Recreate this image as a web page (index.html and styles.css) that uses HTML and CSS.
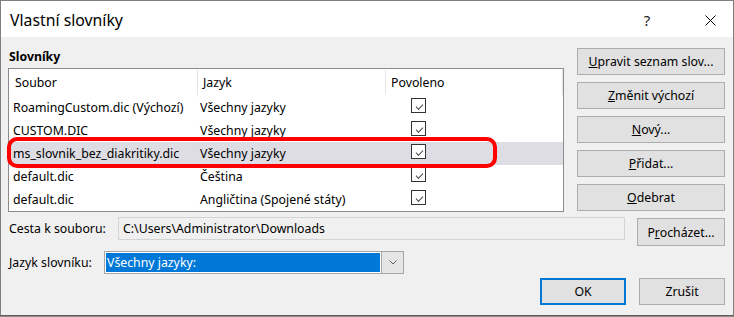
FILE: index.html
```html
<!DOCTYPE html>
<html lang="cs">
<head>
    <meta charset="UTF-8">
    <title>Vlastní slovníky</title>
    <link rel="stylesheet" href="styles.css">
</head>
<body>
    <div class="dialog">
        <div class="titlebar">
            <span class="title">Vlastní slovníky</span>
            <span class="help">?</span>
            <span class="close">
                <svg width="11" height="11" viewBox="0 0 11 11"><path d="M0.5 0.5 L10.5 10.5 M10.5 0.5 L0.5 10.5" stroke="#000" stroke-width="1" fill="none"/></svg>
            </span>
        </div>

        <div class="content">
            <div class="main">
                <div class="group">
                    <div class="group-label">Slovníky</div>
                    <div class="list">
                        <div class="list-head">
                            <span>Soubor</span>
                            <span>Jazyk</span>
                            <span>Povoleno</span>
                        </div>
                        <div class="list-row">
                            <span class="c1">RoamingCustom.dic (Výchozí)</span>
                            <span class="c2">Všechny jazyky</span>
                            <span class="c3"><i class="check"></i></span>
                        </div>
                        <div class="list-row">
                            <span class="c1">CUSTOM.DIC</span>
                            <span class="c2">Všechny jazyky</span>
                            <span class="c3"><i class="check"></i></span>
                        </div>
                        <div class="list-row selected">
                            <span class="c1">ms_slovnik_bez_diakritiky.dic</span>
                            <span class="c2">Všechny jazyky</span>
                            <span class="c3"><i class="check"></i></span>
                        </div>
                        <div class="list-row">
                            <span class="c1">default.dic</span>
                            <span class="c2">Čeština</span>
                            <span class="c3"><i class="check"></i></span>
                        </div>
                        <div class="list-row">
                            <span class="c1">default.dic</span>
                            <span class="c2">Angličtina (Spojené státy)</span>
                            <span class="c3"><i class="check"></i></span>
                        </div>
                        <div class="mark"></div>
                    </div>
                </div>
                <div class="side-buttons">
                    <button class="btn"><u>U</u>pravit seznam slov...</button>
                    <button class="btn"><u>Z</u>měnit výchozí</button>
                    <button class="btn"><u>N</u>ový...</button>
                    <button class="btn"><u>P</u>řidat...</button>
                    <button class="btn"><u>O</u>debrat</button>
                </div>
            </div>

            <div class="path-row">
                <span class="path-label">Cesta k souboru:</span>
                <div class="path-input">C:\Users\Administrator\Downloads</div>
                <button class="btn browse">P<u>r</u>ocházet...</button>
            </div>

            <div class="lang-row">
                <span class="lang-label"><u>J</u>azyk slovníku:</span>
                <div class="select">
                    <div class="select-value">Všechny jazyky:</div>
                    <div class="select-arrow">
                        <svg width="8" height="5" viewBox="0 0 8 5"><path d="M0.5 0.5 L4 4 L7.5 0.5" stroke="#606060" stroke-width="1" fill="none"/></svg>
                    </div>
                </div>
            </div>

            <div class="footer">
                <button class="btn ok">OK</button>
                <button class="btn cancel">Zrušit</button>
            </div>
        </div>
    </div>
</body>
</html>
```

FILE: styles.css
```css
* {
    box-sizing: border-box;
    margin: 0;
    padding: 0;
}
body {
    font-family: "Noto Sans", "Open Sans", sans-serif;
    font-size: 12.3px;
    color: #000;
    background: #8c8c8c;
}
.dialog {
    width: 734px;
    height: 316px;
    border: 1px solid #7f7f7f;
    border-bottom-color: #5c5c5c;
    background: #f0f0f0;
    display: flex;
    flex-direction: column;
}

/* title bar */
.titlebar {
    height: 36px;
    background: #fff;
    display: flex;
    align-items: center;
    padding-top: 2px;
}
.title {
    flex: 1;
    font-size: 15.8px;
    padding-left: 9px;
}
.help {
    width: 46px;
    text-align: center;
    font-size: 15px;
    color: #222;
    margin-right: 17px;
}
.close {
    width: 46px;
    display: flex;
    justify-content: center;
}
.close svg {
    display: block;
}

/* body */
.content {
    flex: 1;
    padding: 11px 8px 0 7px;
}
.main {
    display: flex;
    gap: 13px;
}
.group {
    width: 556px;
}
.group-label {
    font-weight: bold;
    height: 20px;
    line-height: 18px;
    padding-left: 1px;
}
.list {
    position: relative;
    height: 144px;
    border: 1px solid #8c8c8c;
    background: #fff;
}
.list-head,
.list-row {
    display: grid;
    grid-template-columns: 189px 188px 1fr;
}
.list-head {
    height: 27px;
}
.list-head span {
    line-height: 25px;
    margin: 1px 0;
    padding-left: 6px;
    border-right: 1px solid #e5e5e5;
}
.list-head span + span {
    padding-left: 5px;
}
.list-row {
    height: 23px;
    line-height: 23px;
    white-space: nowrap;
}
.list-row.selected {
    background: #dddde3;
}
.list-row .c1 {
    padding-left: 4px;
}
.list-row .c2 {
    padding-left: 2px;
}
.list-row .c3 {
    padding-left: 25px;
    padding-top: 2px;
}
.check {
    display: block;
    width: 15px;
    height: 15px;
    border: 1px solid #333;
    background: #fff;
    position: relative;
}
.check::after {
    content: "";
    position: absolute;
    left: 4px;
    top: 2px;
    width: 6px;
    height: 3px;
    border-left: 1.4px solid #4a4a4a;
    border-bottom: 1.4px solid #4a4a4a;
    transform: translate(0, 3px) rotate(-45deg);
}

/* red highlight drawn over the list */
.mark {
    position: absolute;
    left: -2px;
    top: 68px;
    width: 490px;
    height: 31px;
    border: 4px solid #ff0000;
    border-radius: 10px;
}

/* buttons */
.btn {
    font-family: inherit;
    font-size: 12.3px;
    color: #000;
    background: #e1e1e1;
    border: 1px solid #adadad;
    height: 27px;
    text-align: center;
    cursor: default;
}
.side-buttons {
    width: 148px;
    display: flex;
    flex-direction: column;
    gap: 7px;
}

/* path row */
.path-row {
    display: flex;
    align-items: flex-start;
    margin-top: 5px;
    height: 29px;
}
.path-label {
    width: 110px;
    padding-left: 1px;
    line-height: 23px;
}
.path-input {
    width: 507px;
    height: 23px;
    border: 1px solid #d4d4d4;
    background: #f0f0f0;
    padding-left: 4px;
    line-height: 21px;
}
.browse {
    width: 88px;
    height: 28px;
    margin-left: 12px;
    margin-top: 1px;
}

/* language row */
.lang-row {
    display: flex;
    margin-top: 5px;
}
.lang-label {
    width: 96px;
    padding-left: 1px;
    line-height: 23px;
}
.select {
    display: flex;
    width: 300px;
    height: 23px;
    border: 1px solid #a6a6a6;
    background: #fff;
}
.select-value {
    flex: 1;
    margin: 1px;
    background: #0078d7;
    color: #fff;
    padding-left: 1px;
    line-height: 19px;
}
.select-arrow {
    width: 22px;
    border-left: 1px solid #a6a6a6;
    background: #e5e5e5;
    display: flex;
    align-items: center;
    justify-content: center;
}

/* footer */
.footer {
    display: flex;
    justify-content: flex-end;
    gap: 13px;
    margin-top: 4px;
}
.ok {
    width: 86px;
    border: 2px solid #0078d7;
}
.cancel {
    width: 86px;
}
```
